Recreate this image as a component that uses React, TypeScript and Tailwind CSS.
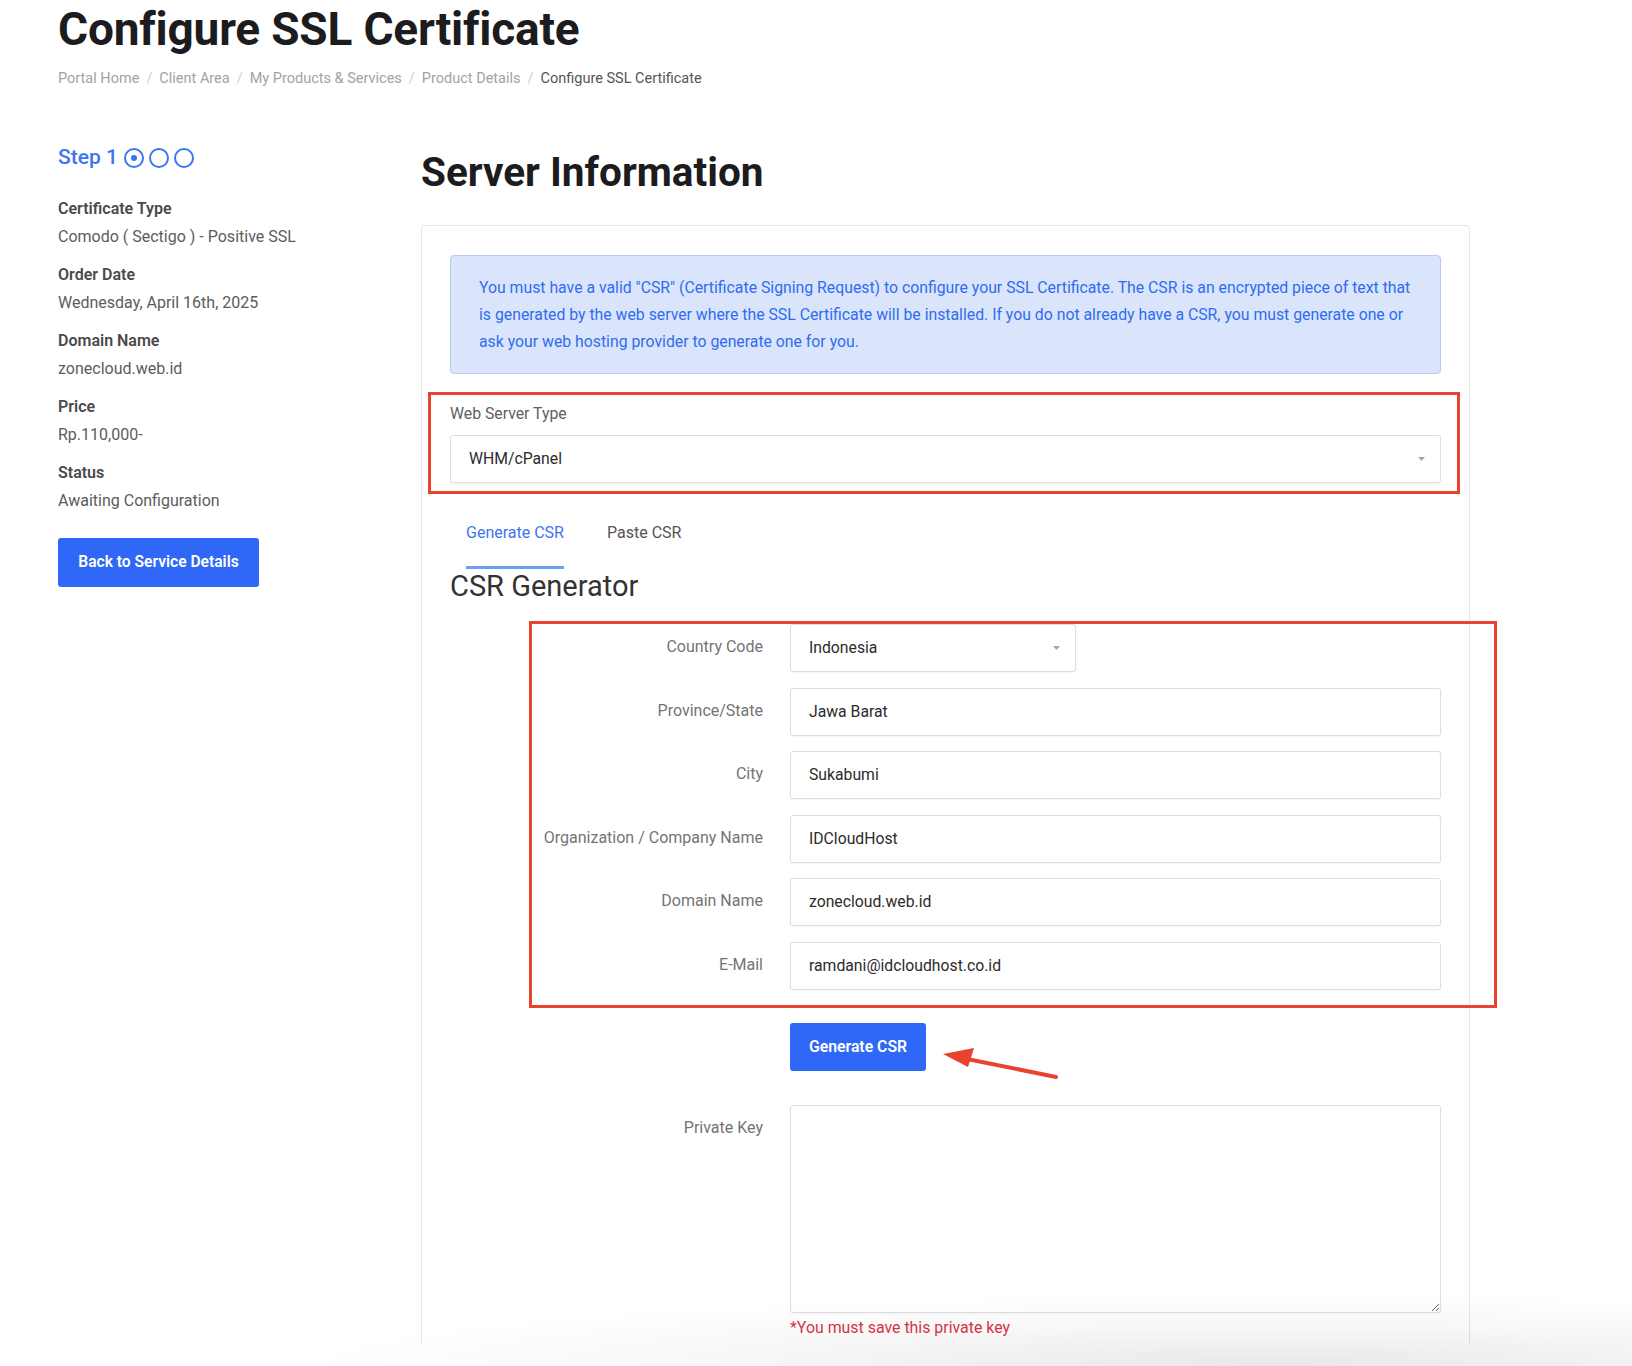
import React from 'react';

const crumbs = ['Portal Home', 'Client Area', 'My Products & Services', 'Product Details'];

const details = [
  { label: 'Certificate Type', value: 'Comodo ( Sectigo ) - Positive SSL' },
  { label: 'Order Date', value: 'Wednesday, April 16th, 2025' },
  { label: 'Domain Name', value: 'zonecloud.web.id' },
  { label: 'Price', value: 'Rp.110,000-' },
  { label: 'Status', value: 'Awaiting Configuration' },
];

const csrFields = [
  { label: 'Province/State', value: 'Jawa Barat' },
  { label: 'City', value: 'Sukabumi' },
  { label: 'Organization / Company Name', value: 'IDCloudHost' },
  { label: 'Domain Name', value: 'zonecloud.web.id' },
  { label: 'E-Mail', value: 'ramdani@idcloudhost.co.id' },
];

const Caret: React.FC = () => (
  <svg width="7" height="4" viewBox="0 0 7 4" className="shrink-0">
    <path d="M0 0h7L3.5 4z" fill="#a8a8a8" />
  </svg>
);

const StepDots: React.FC = () => (
  <div className="ml-[6px] flex items-center gap-[5px]">
    <span className="flex h-[20px] w-[20px] items-center justify-center rounded-full border-2 border-[#3d74f2]">
      <span className="h-[6px] w-[6px] rounded-full bg-[#3d74f2]" />
    </span>
    <span className="h-[20px] w-[20px] rounded-full border-2 border-[#3d74f2]" />
    <span className="h-[20px] w-[20px] rounded-full border-2 border-[#3d74f2]" />
  </div>
);

const inputBox =
  'flex h-[48px] items-center rounded-[3px] border border-[#dedede] bg-white px-[18px] text-[15.75px] text-[#2b2b2b] shadow-[0_1px_2px_rgba(0,0,0,0.05)]';

export default function App() {
  return (
    <div className="relative h-[1366px] w-[1632px] overflow-hidden bg-white font-['Roboto','Liberation_Sans',sans-serif]">
      <div className="h-[1345px] overflow-hidden pl-[58px]">
        <h1 className="mt-[1px] text-[46px] font-bold leading-[56px] tracking-[-0.2px] text-[#1c1c1e]">
          Configure SSL Certificate
        </h1>

        <nav className="mt-[12px] flex items-center text-[14.5px] leading-[20px]">
          {crumbs.map(c => (
            <React.Fragment key={c}>
              <span className="text-[#a3a3a3]">{c}</span>
              <span className="mx-[7px] text-[#d0d0d0]">/</span>
            </React.Fragment>
          ))}
          <span className="text-[#555]">Configure SSL Certificate</span>
        </nav>

        <div className="mt-[51px] flex">
          <aside className="w-[363px] shrink-0">
            <div className="flex h-[36px] items-center">
              <span className="text-[21px] font-medium text-[#3d74f2]">Step 1</span>
              <StepDots />
            </div>

            <div className="mt-[19px] flex flex-col gap-[11px]">
              {details.map(d => (
                <div key={d.label} className="text-[16px] leading-[27px]">
                  <div className="font-semibold text-[#4a4a4a]">{d.label}</div>
                  <div className="mt-[1px] text-[#5c5c5c]">{d.value}</div>
                </div>
              ))}
            </div>

            <button className="mt-[24px] h-[49px] w-[201px] rounded-[3px] bg-[#2f68f6] text-[15.6px] font-semibold text-white">
              Back to Service Details
            </button>
          </aside>

          <main className="w-[1049px] shrink-0">
            <h2 className="mt-[9px] text-[40.5px] font-bold leading-[46px] text-[#1c1c1e]">Server Information</h2>

            <div className="relative mt-[30px] h-[1200px] rounded-t-[4px] border border-[#e6e6e6] px-[28px] pt-[29px]">
              <div className="whitespace-nowrap rounded-[4px] border border-[#b5cbf5] bg-[#dae5fc] py-[18px] pl-[28px] pr-[10px] text-[15.8px] leading-[27px] text-[#2f6cf0]">
                You must have a valid "CSR" (Certificate Signing Request) to configure your SSL Certificate. The CSR is an encrypted piece of text that
                <br />
                is generated by the web server where the SSL Certificate will be installed. If you do not already have a CSR, you must generate one or
                <br />
                ask your web hosting provider to generate one for you.
              </div>

              <div className="mt-[30px] text-[15.8px] leading-[20px] text-[#606060]">Web Server Type</div>
              <div className={`${inputBox} mt-[11px] justify-between pr-[15px]`}>
                <span>WHM/cPanel</span>
                <Caret />
              </div>

              <div className="ml-[16px] mt-[18px] flex gap-[43px] text-[16px] leading-[20px]">
                <div className="border-b-[3px] border-[#6b9ef6] pb-[23px] pt-[22px] text-[#3d74f2]">Generate CSR</div>
                <div className="pb-[23px] pt-[22px] text-[#555]">Paste CSR</div>
              </div>

              <h3 className="text-[29px] font-normal leading-[34px] text-[#333]">CSR Generator</h3>

              <div className="mt-[21px] grid grid-cols-[313px_1fr] gap-x-[27px] gap-y-[15.5px] text-[16px]">
                <label className="pt-[13px] text-right leading-[20px] text-[#747474]">Country Code</label>
                <div className={`${inputBox} w-[286px] justify-between pr-[15px]`}>
                  <span>Indonesia</span>
                  <Caret />
                </div>

                {csrFields.map(f => (
                  <React.Fragment key={f.label}>
                    <label className="pt-[13px] text-right leading-[20px] text-[#747474]">{f.label}</label>
                    <div className={inputBox}>{f.value}</div>
                  </React.Fragment>
                ))}

                <div />
                <div className="mt-[18px]">
                  <button className="h-[48px] w-[136px] rounded-[3px] bg-[#2f68f6] text-[15.8px] font-semibold text-white">
                    Generate CSR
                  </button>
                </div>

                <label className="mt-[18px] pt-[13px] text-right leading-[20px] text-[#747474]">Private Key</label>
                <div className="mt-[18px]">
                  <textarea
                    readOnly
                    className="block h-[208px] w-full rounded-[3px] border border-[#dedede] shadow-[0_1px_2px_rgba(0,0,0,0.05)] outline-none"
                  />
                  <div className="mt-[5px] text-[15.9px] leading-[20px] text-[#d8344a]">*You must save this private key</div>
                </div>
              </div>

              {/* annotation boxes */}
              <div className="pointer-events-none absolute left-[6px] top-[166px] h-[102px] w-[1032px] border-[3px] border-[#e8432e]" />
              <div className="pointer-events-none absolute left-[107px] top-[395px] h-[387px] w-[968px] border-[3px] border-[#e8432e]" />
              <svg className="pointer-events-none absolute left-[515px] top-[818px]" width="130" height="40" viewBox="0 0 130 40">
                <path d="M119 33 L30 15" stroke="#e8432e" strokeWidth="4" strokeLinecap="round" />
                <path d="M6 10 L37 4 L31 23 Z" fill="#e8432e" />
              </svg>
            </div>
          </main>
        </div>
      </div>
      <div className="pointer-events-none absolute bottom-0 left-0 h-[90px] w-full bg-[radial-gradient(ellipse_75%_100%_at_78%_100%,rgba(0,0,0,0.09),rgba(0,0,0,0.03)_45%,rgba(0,0,0,0)_80%)]" />
    </div>
  );
}
